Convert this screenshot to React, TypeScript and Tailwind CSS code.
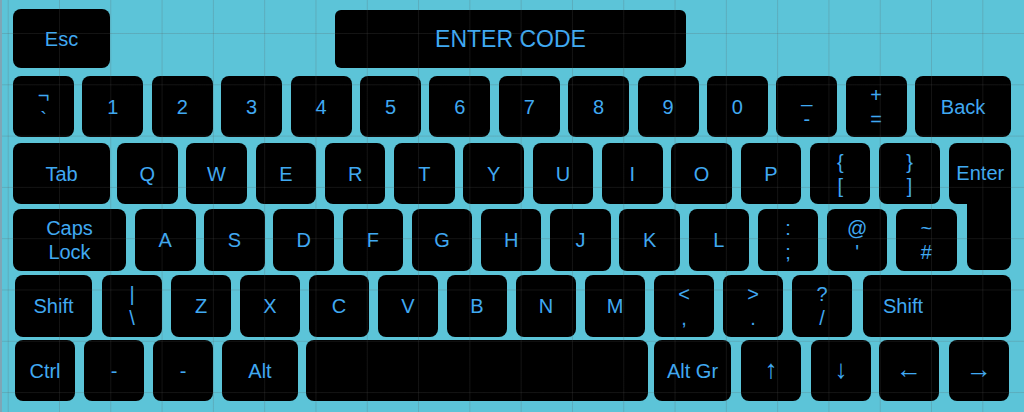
import React from 'react';

type KeyDef = { label: string | [string, string]; cls: string; left?: boolean; txt?: string };

function Key({ label, cls, left, txt }: KeyDef) {
  const lines = Array.isArray(label) ? label : [label];
  return (
    <div
      className={`flex shrink-0 flex-col justify-center rounded-lg bg-black text-[#40a9f2] ${
        txt ?? 'text-[20px] leading-[24px]'
      } ${left ? 'items-start pl-[20px]' : 'items-center'} ${cls}`}
    >
      {lines.map((l, i) => (
        <span key={i} className="whitespace-pre">
          {l}
        </span>
      ))}
    </div>
  );
}

const numRow: KeyDef[] = [
  { label: ['¬', '`'], cls: 'w-[61px]' },
  ...['1', '2', '3', '4', '5', '6', '7', '8', '9', '0'].map((d) => ({ label: d, cls: 'w-[61px]' })),
  { label: ['_', '-'], cls: 'w-[61px]' },
  { label: ['+', '='], cls: 'w-[61px]' },
  { label: 'Back', cls: 'w-[96px]' },
];

const qRow: KeyDef[] = [
  ...'QWERTYUIOP'.split('').map((c) => ({ label: c, cls: 'w-[60.5px]' })),
  { label: ['{', '['], cls: 'w-[60.5px]' },
  { label: ['}', ']'], cls: 'w-[60.5px]' },
];

const aRow: KeyDef[] = [
  ...'ASDFGHJKL'.split('').map((c) => ({ label: c, cls: 'w-[60.5px]' })),
  { label: [':', ';'], cls: 'w-[60.5px]' },
  { label: ['@', "'"], cls: 'w-[60.5px]' },
  { label: ['~', '#'], cls: 'w-[60.5px]' },
];

const zRow: KeyDef[] = [
  { label: ['|', '\\'], cls: 'w-[60px]' },
  ...'ZXCVBNM'.split('').map((c) => ({ label: c, cls: 'w-[60px]' })),
  { label: ['<', ','], cls: 'w-[60px]' },
  { label: ['>', '.'], cls: 'w-[60px]' },
  { label: ['?', '/'], cls: 'w-[60px]' },
];

const arrow = 'text-[26px] leading-[26px] pb-[3px]';

const bottomRow: KeyDef[] = [
  { label: 'Ctrl', cls: 'w-[60px] ml-[15px]' },
  { label: '-', cls: 'w-[60px] ml-[9px]' },
  { label: '-', cls: 'w-[60px] ml-[9px]' },
  { label: 'Alt', cls: 'w-[76px] ml-[9px]' },
  { label: '', cls: 'w-[342px] ml-[8px]' },
  { label: 'Alt Gr', cls: 'w-[77px] ml-[6px]' },
  { label: '↑', cls: 'w-[60px] ml-[10px]', txt: arrow },
  { label: '↓', cls: 'w-[60px] ml-[10px]', txt: arrow },
  { label: '←', cls: 'w-[60px] ml-[8px]', txt: arrow },
  { label: '→', cls: 'w-[60px] ml-[10px]', txt: arrow },
];

export default function App() {
  return (
    <div className="relative h-[412px] w-full overflow-hidden border-l-2 border-[#7ea6b6] bg-[#5cc4d8] font-['Liberation_Sans',Arial,sans-serif]">
      <div className="flex flex-col pt-[9px] ml-[-2px]">
        {/* top bar */}
        <div className="flex items-start">
          <Key label="Esc" cls="ml-[13px] h-[59px] w-[97px]" />
          <div className="ml-[225px] mt-[1px] flex h-[58px] w-[351px] items-center justify-center rounded-md bg-black text-[23px] text-[#40a9f2]">
            ENTER CODE
          </div>
        </div>

        {/* numbers */}
        <div className="mt-[8px] flex h-[61px] gap-[8.4px] pl-[13px]">
          {numRow.map((k, i) => (
            <Key key={i} {...k} cls={`${k.cls} h-full`} />
          ))}
        </div>

        {/* qwerty */}
        <div className="mt-[6px] flex h-[61px] items-start pl-[13px]">
          <Key label="Tab" cls="h-full w-[97px]" />
          <div className="ml-[7px] flex h-full gap-[8.8px]">
            {qRow.map((k, i) => (
              <Key key={i} {...k} cls={`${k.cls} h-full`} />
            ))}
          </div>
          <div className="ml-[9.5px] flex h-full w-[62px] items-center justify-center rounded-t-lg rounded-bl-lg bg-black pb-[2px] text-[20px] text-[#40a9f2]">
            Enter
          </div>
        </div>

        {/* home row */}
        <div className="mt-[5px] flex h-[62px] items-start pl-[13px]">
          <Key label={['Caps', 'Lock']} cls="h-full w-[113px]" />
          <div className="ml-[9px] flex h-full gap-[8.7px]">
            {aRow.map((k, i) => (
              <Key key={i} {...k} cls={`${k.cls} h-full`} />
            ))}
          </div>
          <div className="mt-[-5px] ml-[10px] h-[66px] w-[44px] rounded-b-lg bg-black" />
        </div>

        {/* shift row */}
        <div className="mt-[4px] flex h-[62px] items-start pl-[15px]">
          <Key label="Shift" cls="h-full w-[77px]" />
          <div className="ml-[10px] flex h-full gap-[9px]">
            {zRow.map((k, i) => (
              <Key key={i} {...k} cls={`${k.cls} h-full`} />
            ))}
          </div>
          <Key label="Shift" left cls="ml-[11px] h-full w-[148px]" />
        </div>

        {/* bottom row */}
        <div className="mt-[3px] flex h-[61px]">
          {bottomRow.map((k, i) => (
            <Key key={i} {...k} cls={`${k.cls} h-full`} />
          ))}
        </div>
      </div>

      {/* scene grid overlay */}
      <div className="pointer-events-none absolute inset-0 bg-[linear-gradient(to_right,rgba(90,90,90,0.22)_1px,transparent_1px),linear-gradient(to_bottom,rgba(90,90,90,0.22)_1px,transparent_1px)] [background-size:51.3px_51.3px] [background-position:5.7px_33px]" />
    </div>
  );
}
